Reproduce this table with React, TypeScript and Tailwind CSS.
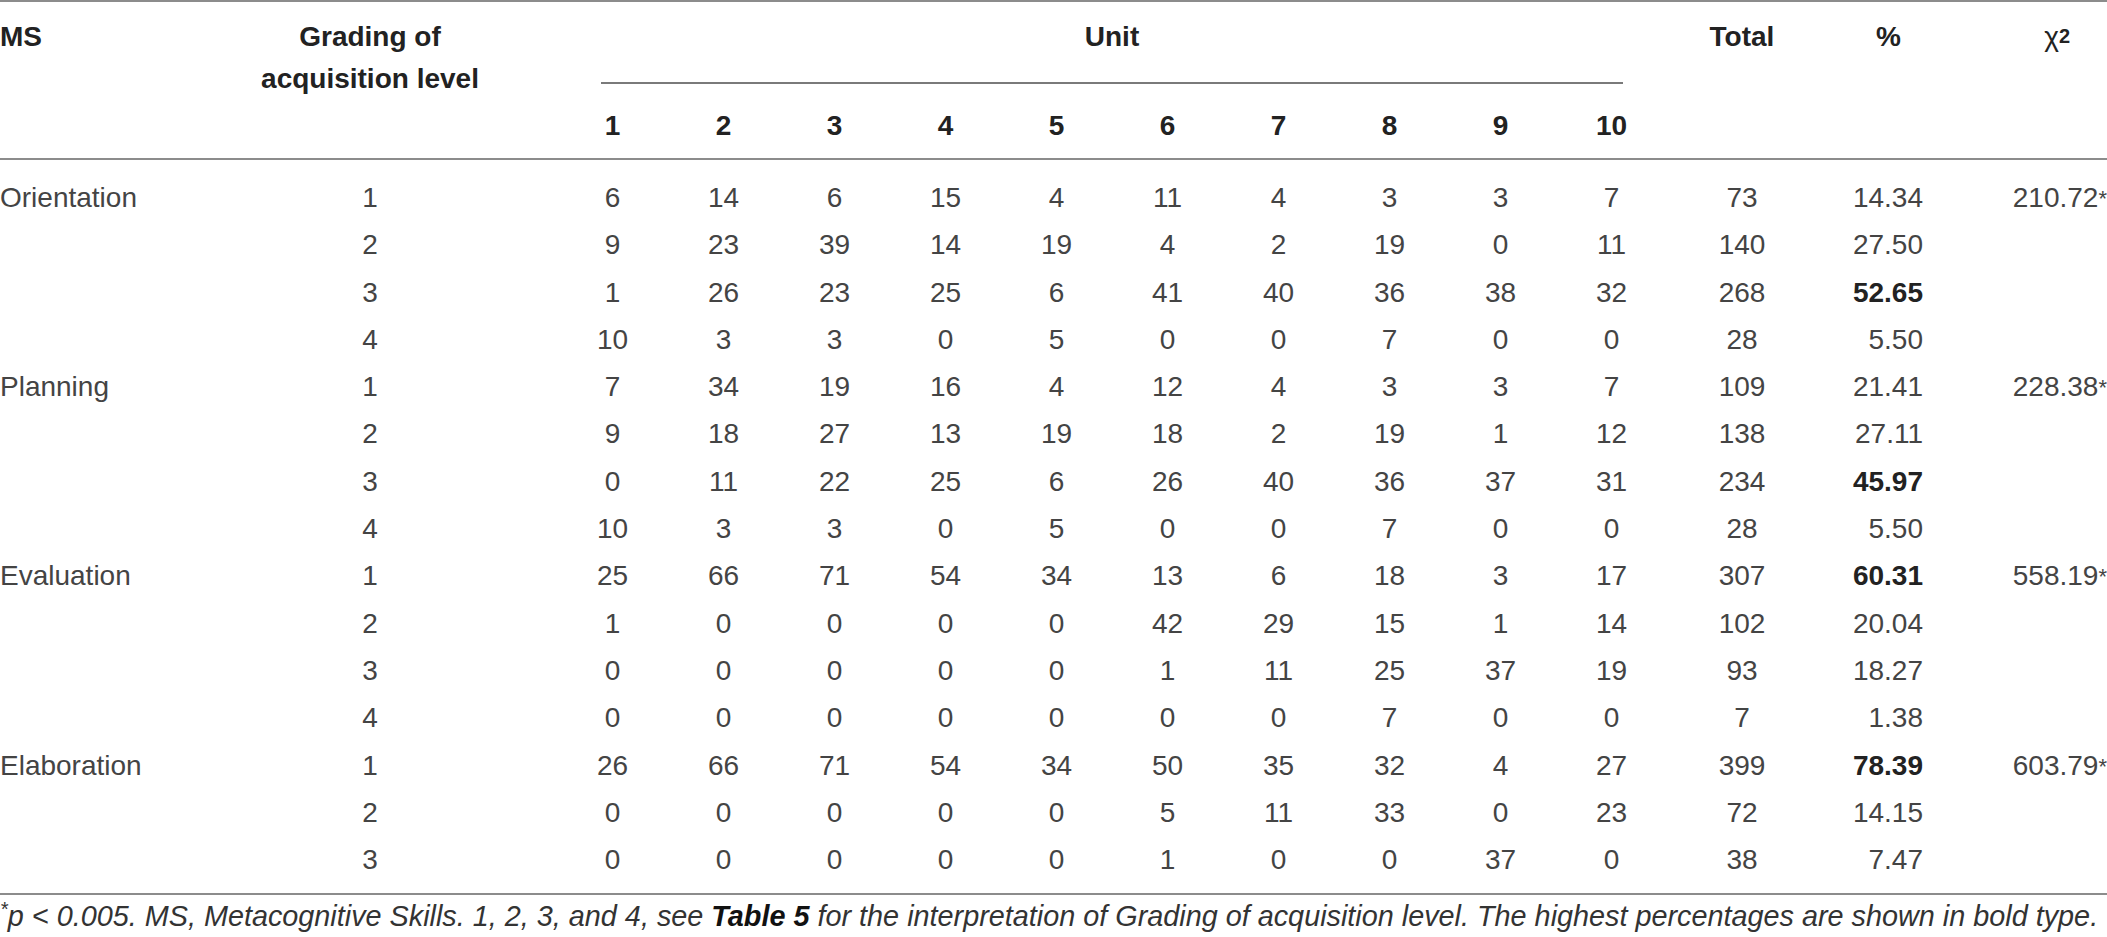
import React from 'react';

type Row = {
  ms?: string;
  grade: string;
  units: string[];
  total: string;
  pct: string;
  bold?: boolean;
  chi?: string;
};

const rows: Row[] = [
  { ms: 'Orientation', grade: '1', units: ['6', '14', '6', '15', '4', '11', '4', '3', '3', '7'], total: '73', pct: '14.34', chi: '210.72' },
  { grade: '2', units: ['9', '23', '39', '14', '19', '4', '2', '19', '0', '11'], total: '140', pct: '27.50' },
  { grade: '3', units: ['1', '26', '23', '25', '6', '41', '40', '36', '38', '32'], total: '268', pct: '52.65', bold: true },
  { grade: '4', units: ['10', '3', '3', '0', '5', '0', '0', '7', '0', '0'], total: '28', pct: '5.50' },
  { ms: 'Planning', grade: '1', units: ['7', '34', '19', '16', '4', '12', '4', '3', '3', '7'], total: '109', pct: '21.41', chi: '228.38' },
  { grade: '2', units: ['9', '18', '27', '13', '19', '18', '2', '19', '1', '12'], total: '138', pct: '27.11' },
  { grade: '3', units: ['0', '11', '22', '25', '6', '26', '40', '36', '37', '31'], total: '234', pct: '45.97', bold: true },
  { grade: '4', units: ['10', '3', '3', '0', '5', '0', '0', '7', '0', '0'], total: '28', pct: '5.50' },
  { ms: 'Evaluation', grade: '1', units: ['25', '66', '71', '54', '34', '13', '6', '18', '3', '17'], total: '307', pct: '60.31', bold: true, chi: '558.19' },
  { grade: '2', units: ['1', '0', '0', '0', '0', '42', '29', '15', '1', '14'], total: '102', pct: '20.04' },
  { grade: '3', units: ['0', '0', '0', '0', '0', '1', '11', '25', '37', '19'], total: '93', pct: '18.27' },
  { grade: '4', units: ['0', '0', '0', '0', '0', '0', '0', '7', '0', '0'], total: '7', pct: '1.38' },
  { ms: 'Elaboration', grade: '1', units: ['26', '66', '71', '54', '34', '50', '35', '32', '4', '27'], total: '399', pct: '78.39', bold: true, chi: '603.79' },
  { grade: '2', units: ['0', '0', '0', '0', '0', '5', '11', '33', '0', '23'], total: '72', pct: '14.15' },
  { grade: '3', units: ['0', '0', '0', '0', '0', '1', '0', '0', '37', '0'], total: '38', pct: '7.47' },
];

const cols = 'grid grid-cols-[260px_220px_77px_repeat(10,111px)_150px_143px_147px]';

export default function App() {
  return (
    <div className="w-[2107px] h-[937px] bg-white font-['Liberation_Sans',Arial,sans-serif] text-[28px] text-[#444] overflow-hidden">
      <div className="h-[2px] bg-[#8c8c8c]" />

      {/* header */}
      <div className={`${cols} font-bold text-[#222] leading-[42px]`}>
        <div className="row-span-2 pt-[14px]">MS</div>
        <div className="row-span-2 pt-[14px] text-center">
          Grading of
          <br />
          acquisition level
        </div>
        <div className="row-span-2" />
        <div className="col-span-10 h-[82px] pt-[14px] flex flex-col">
          <div className="text-center">Unit</div>
          <div className="mt-auto h-[2px] bg-[#7a7a7a] ml-[44px] mr-[44px]" />
        </div>
        <div className="row-span-2 pt-[14px] text-center">Total</div>
        <div className="row-span-2 pt-[14px] text-center">%</div>
        <div className="row-span-2 pt-[14px] text-right pr-[37px]">
          <span className="font-normal">χ</span>
          <sup className="text-[20px] relative -top-[3px]">2</sup>
        </div>
        {['1', '2', '3', '4', '5', '6', '7', '8', '9', '10'].map((n) => (
          <div key={n} className="text-center pt-[21px] pb-[11px]">
            {n}
          </div>
        ))}
      </div>
      <div className="h-[2px] bg-[#8c8c8c]" />

      {/* body */}
      <div className="pt-[14px] pb-[10px] leading-[47.3px]">
        {rows.map((r, i) => (
          <div key={i} className={cols}>
            <div>{r.ms}</div>
            <div className="text-center">{r.grade}</div>
            <div />
            {r.units.map((u, j) => (
              <div key={j} className="text-center">
                {u}
              </div>
            ))}
            <div className="text-center">{r.total}</div>
            <div className={`text-right pr-[37px] ${r.bold ? 'font-bold text-[#222]' : ''}`}>{r.pct}</div>
            <div className="text-right">
              {r.chi && (
                <>
                  {r.chi}
                  <sup className="text-[22px] relative -top-[1px]">*</sup>
                </>
              )}
            </div>
          </div>
        ))}
      </div>
      <div className="h-[2px] bg-[#8c8c8c]" />

      {/* footnote */}
      <p className="italic text-[28.8px] leading-[34px] pt-[4px] text-[#333] whitespace-nowrap">
        <sup className="text-[20px]">*</sup>p &lt; 0.005. MS, Metacognitive Skills. 1, 2, 3, and 4, see{' '}
        <b className="text-[#111]">Table 5</b> for the interpretation of Grading of acquisition level. The highest
        percentages are shown in bold type.
      </p>
    </div>
  );
}
